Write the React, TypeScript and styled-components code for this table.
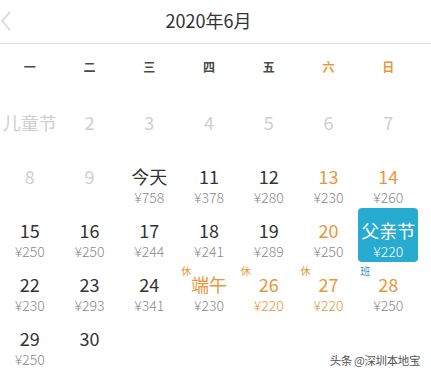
import React from 'react';
import styled, { createGlobalStyle } from 'styled-components';

const GlobalStyle = createGlobalStyle`
  body {
    margin: 0;
    background: #fff;
    font-family: "Noto Sans CJK SC", "Noto Sans", sans-serif;
  }
`;

const ORANGE = '#e8963c';
const GRAY = '#cfcfcf';

type Tone = 'normal' | 'past' | 'weekend' | 'selected';

type Day = {
  label?: string;
  price?: string;
  tone?: Tone;
  priceOrange?: boolean;
  tag?: '休' | '班';
};

const days: Day[] = [
  { label: '儿童节', tone: 'past' },
  { label: '2', tone: 'past' },
  { label: '3', tone: 'past' },
  { label: '4', tone: 'past' },
  { label: '5', tone: 'past' },
  { label: '6', tone: 'past' },
  { label: '7', tone: 'past' },
  { label: '8', tone: 'past' },
  { label: '9', tone: 'past' },
  { label: '今天', price: '¥758' },
  { label: '11', price: '¥378' },
  { label: '12', price: '¥280' },
  { label: '13', price: '¥230', tone: 'weekend' },
  { label: '14', price: '¥260', tone: 'weekend' },
  { label: '15', price: '¥250' },
  { label: '16', price: '¥250' },
  { label: '17', price: '¥244' },
  { label: '18', price: '¥241' },
  { label: '19', price: '¥289' },
  { label: '20', price: '¥250', tone: 'weekend' },
  { label: '父亲节', price: '¥220', tone: 'selected' },
  { label: '22', price: '¥230' },
  { label: '23', price: '¥293' },
  { label: '24', price: '¥341' },
  { label: '端午', price: '¥230', tone: 'weekend', tag: '休' },
  { label: '26', price: '¥220', tone: 'weekend', priceOrange: true, tag: '休' },
  { label: '27', price: '¥220', tone: 'weekend', priceOrange: true, tag: '休' },
  { label: '28', price: '¥250', tone: 'weekend', tag: '班' },
  { label: '29', price: '¥250' },
  { label: '30' },
];

const weekdays = ['一', '二', '三', '四', '五', '六', '日'];

const Page = styled.div`
  position: relative;
  width: 431px;
  height: 376px;
  overflow: hidden;
`;

const Header = styled.div`
  position: relative;
  height: 44px;
  padding-bottom: 4px;
  box-sizing: border-box;
  display: flex;
  align-items: center;
  justify-content: center;
  border-bottom: 1px solid #dedede;
`;

const Back = styled.svg`
  position: absolute;
  left: 0;
  top: 11px;
`;

const Title = styled.div`
  font-size: 18px;
  color: #333;
  padding-right: 14px;
`;

const Grid = styled.div`
  width: 418px;
  display: grid;
  grid-template-columns: repeat(7, 1fr);
`;

const WeekRow = styled(Grid)`
  height: 44px;
  align-items: center;
  margin-bottom: 12px;
`;

const WeekDay = styled.div<{ $weekend: boolean }>`
  text-align: center;
  font-size: 12px;
  font-weight: 700;
  color: ${({ $weekend }) => ($weekend ? ORANGE : '#4a4a4a')};
`;

const DayGrid = styled(Grid)`
  grid-auto-rows: 54px;
`;

const Cell = styled.div<{ $selected: boolean }>`
  position: relative;
  display: flex;
  flex-direction: column;
  align-items: center;
  padding-top: 10px;
  box-sizing: border-box;
  border-radius: 4px;
  background: ${({ $selected }) => ($selected ? '#27abd0' : 'transparent')};
`;

const toneColor: Record<Tone, string> = {
  normal: '#333',
  past: GRAY,
  weekend: ORANGE,
  selected: '#fff',
};

const Num = styled.div<{ $tone: Tone }>`
  font-size: 18px;
  line-height: 24px;
  white-space: nowrap;
  color: ${({ $tone }) => toneColor[$tone]};
`;

const Price = styled.div<{ $color: string }>`
  font-size: 14px;
  line-height: 18px;
  font-weight: 300;
  color: ${({ $color }) => $color};
`;

const Tag = styled.span<{ $work: boolean }>`
  position: absolute;
  top: 3px;
  left: 2px;
  font-size: 10px;
  line-height: 12px;
  color: ${({ $work }) => ($work ? '#3a8ec4' : ORANGE)};
`;

const Watermark = styled.div`
  position: absolute;
  right: 11px;
  bottom: 8px;
  font-size: 11.5px;
  color: #555;
  letter-spacing: -0.4px;
`;

export default function App() {
  return (
    <Page>
      <GlobalStyle />
      <Header>
        <Back width="12" height="20" viewBox="0 0 12 20">
          <path d="M10 1 L2 10 L10 19" fill="none" stroke="#dcdcdc" strokeWidth="2" />
        </Back>
        <Title>2020年6月</Title>
      </Header>
      <WeekRow>
        {weekdays.map((w, i) => (
          <WeekDay key={w} $weekend={i >= 5}>
            {w}
          </WeekDay>
        ))}
      </WeekRow>
      <DayGrid>
        {days.map((d, i) => {
          const tone = d.tone ?? 'normal';
          const priceColor = tone === 'selected' ? '#fff' : d.priceOrange ? ORANGE : '#8a8a8a';
          return (
            <Cell key={i} $selected={tone === 'selected'}>
              {d.tag && <Tag $work={d.tag === '班'}>{d.tag}</Tag>}
              <Num $tone={tone}>{d.label}</Num>
              {d.price && <Price $color={priceColor}>{d.price}</Price>}
            </Cell>
          );
        })}
      </DayGrid>
      <Watermark>头条 @深圳本地宝</Watermark>
    </Page>
  );
}
